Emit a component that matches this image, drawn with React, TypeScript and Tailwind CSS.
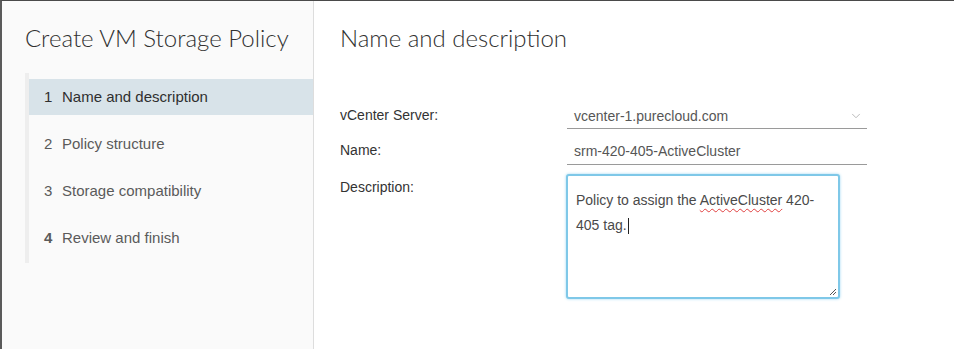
import { ChevronDown } from "lucide-react";

const steps = [
	{ n: "1", label: "Name and description", active: true },
	{ n: "2", label: "Policy structure", active: false },
	{ n: "3", label: "Storage compatibility", active: false },
	{ n: "4", label: "Review and finish", active: false },
];

export default function App() {
	return (
		<div className="w-[954px] h-[349px] flex border-t border-t-[#4a4a4a] border-l-2 border-l-[#5a5a5a] bg-white overflow-hidden font-['Liberation_Sans',Arial,sans-serif]">
			{/* Left: wizard steps */}
			<div className="w-[312px] shrink-0 bg-[#fafafa] border-r border-[#dddddd] pl-[23px] pt-[21px]">
				<h1 className="font-['Lato',sans-serif] font-light text-[24px] leading-[31px] text-[#313131]">
					Create VM Storage Policy
				</h1>
				<nav className="mt-[20px] border-l-[4px] border-[#eeeeee] pt-[6px] pb-[7px] flex flex-col gap-[11px]">
					{steps.map((s) => (
						<div
							key={s.n}
							className={`h-[36px] flex items-center pl-[15px] text-[15px] ${s.active ? "bg-[#d8e3e9] text-[#2f2f2f]" : "text-[#5a5a5a]"}`}
						>
							<span className={`w-[18px] ${s.n === "4" ? "font-bold" : ""}`}>{s.n}</span>
							<span>{s.label}</span>
						</div>
					))}
				</nav>
			</div>

			{/* Right: form */}
			<div className="flex-1 pl-[26px] pt-[21px]">
				<h2 className="font-['Lato',sans-serif] font-light text-[24px] leading-[31px] text-[#313131]">
					Name and description
				</h2>
				<div className="mt-[49px] text-[14px]">
					<div className="flex items-start h-[36px]">
						<label className="w-[227px] pt-[3px] text-[#333333]">vCenter Server:</label>
						<div className="w-[300px] h-[27px] flex items-center justify-between border-b border-[#9a9a9a] pl-[7px] pr-[4px] pt-[2px] text-[#565656]">
							<span>vcenter-1.purecloud.com</span>
							<ChevronDown className="w-[14px] h-[14px] text-[#b0b0b0]" strokeWidth={1.5} />
						</div>
					</div>
					<div className="flex items-start h-[36px]">
						<label className="w-[227px] pt-[2px] text-[#333333]">Name:</label>
						<div className="w-[300px] h-[27px] flex items-center border-b border-[#9a9a9a] pl-[7px] text-[#565656]">
							srm-420-405-ActiveCluster
						</div>
					</div>
					<div className="flex items-start">
						<label className="w-[226px] pt-[3px] text-[#333333]">Description:</label>
						<div className="relative w-[274px] h-[125px] border-2 border-[#7fc8e8] rounded-[3px] shadow-[0_0_3px_#9fd8f2] bg-white px-[8px] pt-[12px] leading-[25px] text-[#4a4a4a]">
							<div>
								Policy to assign the{" "}
								<span className="underline decoration-wavy decoration-[#e04040] decoration-1 underline-offset-[3px]">ActiveCluster</span>{" "}
								420-
							</div>
							<div className="flex items-center">
								405 tag.<span className="inline-block w-px h-[16px] bg-[#222] ml-px" />
							</div>
							<svg className="absolute right-[1px] bottom-[1px]" width="9" height="9" viewBox="0 0 9 9">
								<path d="M8 2 L2 8 M8 5 L5 8" stroke="#555" strokeWidth="1" />
							</svg>
						</div>
					</div>
				</div>
			</div>
		</div>
	);
}
